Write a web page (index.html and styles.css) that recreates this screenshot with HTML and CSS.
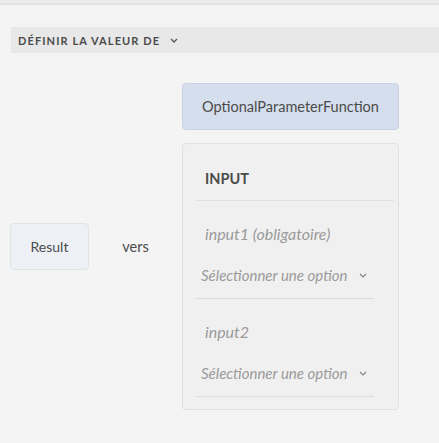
FILE: index.html
```html
<!DOCTYPE html>
<html lang="fr">
<head>
<meta charset="utf-8">
<link rel="stylesheet" href="styles.css">
</head>
<body>
<div class="topstrip"></div>
<div class="header">
  <span class="header-title">DÉFINIR LA VALEUR DE</span>
  <svg class="chev chev-h" width="8" height="5" viewBox="0 0 8 5"><path d="M1 1l3 3 3-3" fill="none" stroke="#555" stroke-width="1.3"/></svg>
</div>
<div class="main">
  <div class="result">Result</div>
  <div class="vers">vers</div>
  <div class="right">
    <div class="func">OptionalParameterFunction</div>
    <div class="card">
      <div class="card-title">INPUT</div>
      <div class="divider"></div>
      <div class="param">
        <div class="param-name">input1 (obligatoire)</div>
        <div class="select"><span>Sélectionner une option</span>
          <svg class="chev" width="8" height="5" viewBox="0 0 8 5"><path d="M1 1l3 3 3-3" fill="none" stroke="#888" stroke-width="1.2"/></svg>
        </div>
      </div>
      <div class="param">
        <div class="param-name">input2</div>
        <div class="select"><span>Sélectionner une option</span>
          <svg class="chev" width="8" height="5" viewBox="0 0 8 5"><path d="M1 1l3 3 3-3" fill="none" stroke="#888" stroke-width="1.2"/></svg>
        </div>
      </div>
    </div>
  </div>
</div>
</body>
</html>
```
FILE: styles.css
```css
html, body { margin: 0; padding: 0; }
body {
  background: #f4f4f4;
  font-family: Lato, "Open Sans", sans-serif;
  color: #4b4b4b;
  width: 439px;
  height: 443px;
  overflow: hidden;
}
.topstrip {
  height: 3px;
  background: #ebebeb;
  border-bottom: 2px solid #e3e3e3;
}
.header {
  margin: 22px 0 0 11px;
  height: 26px;
  background: #e8e8e8;
  display: flex;
  align-items: center;
  padding-left: 7px;
}
.header-title {
  font-size: 11px;
  font-weight: 700;
  letter-spacing: 1.1px;
  color: #4b4b4b;
}
.chev-h { margin-left: 10px; }
.main {
  display: flex;
  align-items: center;
  margin-top: 30px;
}
.result {
  margin-left: 10px;
  width: 77px;
  height: 45px;
  background: #edf0f5;
  border: 1px solid #e0e3e8;
  border-radius: 4px;
  display: flex;
  align-items: center;
  justify-content: center;
  font-size: 14px;
  color: #4b4b4b;
}
.vers {
  width: 93px;
  text-align: center;
  font-size: 14.5px;
  color: #4b4b4b;
}
.right {
  width: 217px;
  display: flex;
  flex-direction: column;
  gap: 13px;
}
.func {
  height: 45px;
  background: #d5deec;
  border: 1px solid #c8d2e2;
  border-radius: 4px;
  display: flex;
  align-items: center;
  justify-content: center;
  font-size: 14.5px;
  color: #4b4b4b;
}
.card {
  height: 265px;
  background: #f0f0f0;
  border: 1px solid #e0e0e0;
  border-radius: 4px;
  padding: 0 4px 0 12px;
}
.card-title {
  font-size: 14.5px;
  font-weight: 700;
  line-height: 20px;
  padding: 25px 0 0 10px;
  height: 31px;
  color: #4b4b4b;
}
.divider {
  height: 1px;
  background: #e2e2e2;
}
.param {
  width: 179px;
  border-bottom: 1px solid #dcdcdc;
  padding-bottom: 13px;
}
.param-name {
  font-style: italic;
  font-size: 16px;
  line-height: 20px;
  color: #9a9a9a;
  padding: 23px 0 0 10px;
}
.select {
  display: flex;
  align-items: center;
  font-style: italic;
  font-size: 15px;
  line-height: 20px;
  color: #9a9a9a;
  margin-top: 21px;
  padding-left: 6px;
}
.select .chev { margin-left: 12px; }
```
